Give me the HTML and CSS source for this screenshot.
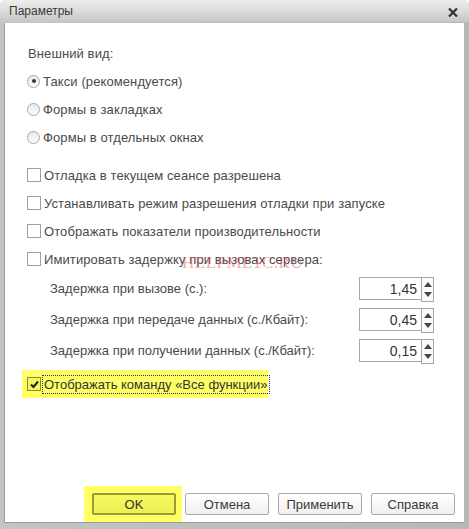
FILE: index.html
```html
<!DOCTYPE html>
<html lang="ru">
<head>
    <meta charset="UTF-8">
    <title>Параметры</title>
    <link rel="stylesheet" href="styles.css">
</head>
<body>
    <div class="window">
        <div class="titlebar">
            <span class="title">Параметры</span>
            <svg class="close" width="10" height="9" viewBox="0 0 10 9">
                <path d="M1 0.5 L9 8.5 M9 0.5 L1 8.5" stroke="#333" stroke-width="2.2"/>
            </svg>
        </div>
        <div class="content">
            <div class="row label-row">Внешний вид:</div>
            <div class="row"><span class="radio checked"></span>Такси (рекомендуется)</div>
            <div class="row"><span class="radio"></span>Формы в закладках</div>
            <div class="row"><span class="radio"></span>Формы в отдельных окнах</div>

            <div class="group">
                <div class="row"><span class="check"></span>Отладка в текущем сеансе разрешена</div>
                <div class="row"><span class="check"></span>Устанавливать режим разрешения отладки при запуске</div>
                <div class="row"><span class="check"></span>Отображать показатели производительности</div>
                <div class="row"><span class="check"></span>Имитировать задержку при вызовах сервера:</div>
            </div>

            <div class="delay">
                <span>Задержка при вызове (с.):</span>
                <div class="spin"><div class="spin-value">1,45</div><div class="spin-arrows"><i class="up"></i><i class="down"></i></div></div>
            </div>
            <div class="delay">
                <span>Задержка при передаче данных (с./Кбайт):</span>
                <div class="spin"><div class="spin-value">0,45</div><div class="spin-arrows"><i class="up"></i><i class="down"></i></div></div>
            </div>
            <div class="delay">
                <span>Задержка при получении данных (с./Кбайт):</span>
                <div class="spin"><div class="spin-value">0,15</div><div class="spin-arrows"><i class="up"></i><i class="down"></i></div></div>
            </div>

            <div class="highlight-row">
                <span class="check checked">
                    <svg width="11" height="11" viewBox="0 0 11 11"><path d="M2 5.5 L4.5 8 L9 2.5" fill="none" stroke="#222" stroke-width="2"/></svg>
                </span>
                <span class="focused">Отображать команду «Все функции»</span>
            </div>

            <div class="footer">
                <div class="mark"><button class="btn ok">OK</button></div>
                <button class="btn">Отмена</button>
                <button class="btn">Применить</button>
                <button class="btn">Справка</button>
            </div>

            <div class="watermark">HELPME1C.RU</div>
        </div>
    </div>
</body>
</html>
```

FILE: styles.css
```css
body {
    margin: 0;
    padding: 0;
    background: #fff;
    font-family: "Liberation Sans", Arial, sans-serif;
}
.window {
    width: 469px;
    height: 529px;
    display: flex;
    flex-direction: column;
    background: linear-gradient(to right, #c4c4c4, #b8b8b8);
    border-radius: 6px 6px 0 0;
    box-sizing: border-box;
}
.titlebar {
    height: 22px;
    display: flex;
    align-items: center;
    justify-content: space-between;
    padding: 0 11px 0 9px;
    background: linear-gradient(to bottom, #eeeeee, #d9d9d9 55%, #c6c6c6);
    border-radius: 6px 6px 0 0;
}
.title {
    font-size: 12px;
    color: #3a3a3a;
}
.close {
    margin-top: 2px;
}
.content {
    position: relative;
    flex: 1;
    margin: 1px 5px 6px 4px;
    background: #fff;
    border-left: 1px solid #9c9c9c;
    border-bottom: 1px solid #9c9c9c;
    padding: 16px 0 0 22px;
    display: flex;
    flex-direction: column;
    color: #4a4a4a;
    font-size: 13px;
}
.row {
    height: 28px;
    display: flex;
    align-items: center;
    letter-spacing: 0.1px;
    white-space: nowrap;
}
.label-row {
    margin-left: 1px;
}
.radio {
    width: 11px;
    height: 11px;
    border: 1px solid #a8a8a8;
    border-radius: 50%;
    margin-right: 3px;
    background: linear-gradient(to bottom, #e8e8e8, #ffffff);
    display: flex;
    align-items: center;
    justify-content: center;
}
.radio.checked::after {
    content: "";
    width: 4px;
    height: 4px;
    border-radius: 50%;
    background: #333;
}
.group {
    margin-top: 10px;
}
.check {
    width: 12px;
    height: 12px;
    border: 1px solid #a0a0a0;
    background: #fff;
    margin-right: 3px;
    display: flex;
    align-items: center;
    justify-content: center;
    flex-shrink: 0;
}
.delay {
    height: 31px;
    display: flex;
    align-items: center;
    justify-content: space-between;
    padding: 0 30px 0 23px;
}
.spin {
    display: flex;
    height: 23px;
}
.spin-value {
    width: 57px;
    border: 1px solid #a6a6a6;
    border-right: none;
    text-align: right;
    padding-right: 4px;
    line-height: 23px;
    font-size: 14px;
    color: #333;
}
.spin-arrows {
    width: 13px;
    border: 1px solid #a6a6a6;
    display: flex;
    flex-direction: column;
    align-items: center;
    justify-content: space-around;
    padding: 2px 0;
    box-sizing: border-box;
    height: 25px;
    background: #fafafa;
}
.up, .down {
    width: 0;
    height: 0;
    border-left: 4px solid transparent;
    border-right: 4px solid transparent;
}
.up {
    border-bottom: 5px solid #444;
}
.down {
    border-top: 5px solid #444;
}
.highlight-row {
    margin: 4px 0 0 -5px;
    width: 246px;
    height: 28px;
    box-sizing: border-box;
    padding-left: 5px;
    background: #ffff66;
    display: flex;
    align-items: center;
    color: #333;
    white-space: nowrap;
}
.check.checked {
    border-color: #8c8c3a;
    background: #f5f560;
    margin-right: 2px;
}
.focused {
    outline: 1px dotted #333;
    outline-offset: 0;
    padding: 1px;
    line-height: 15px;
}
.footer {
    margin-top: auto;
    height: 36px;
    display: flex;
    align-items: center;
    justify-content: flex-end;
    gap: 9px;
    padding-right: 9px;
    margin-left: -22px;
}
.mark {
    background: #ffff66;
    height: 36px;
    display: flex;
    align-items: center;
    padding: 0 6px 0 8px;
    margin-right: -6px;
}
.btn {
    width: 84px;
    height: 22px;
    font-family: "Liberation Sans", Arial, sans-serif;
    font-size: 13px;
    color: #3a3a3a;
    border: 1px solid #a9a9a9;
    border-radius: 2px;
    background: linear-gradient(to bottom, #ffffff, #f0f0f0);
    padding: 0;
}
.btn.ok {
    border: 2px solid #9a9a38;
    background: linear-gradient(to bottom, #f8f860, #eeee55);
    color: #333;
}
.watermark {
    position: absolute;
    left: 177px;
    top: 230px;
    font-family: "Liberation Serif", serif;
    font-size: 17px;
    letter-spacing: 0.5px;
    color: rgba(225, 70, 70, 0.45);
    pointer-events: none;
}
```
